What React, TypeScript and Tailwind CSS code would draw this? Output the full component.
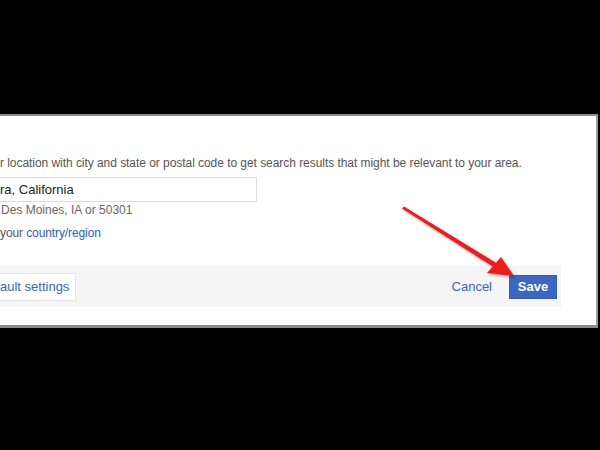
export default function App() {
  return (
    <div className="w-[600px] h-[450px] bg-black pt-[114px] font-['Liberation_Sans',Arial,sans-serif] overflow-hidden">
      <div className="relative w-[598px] h-[214px] bg-white border-t-2 border-t-[#8c8c8c] border-r-2 border-r-[#9a9a9a] border-b-[3px] border-b-[#8a8a8a] overflow-hidden">
        <div className="pt-[40px]">
          <p className="text-[12px] leading-[15px] text-[#555] whitespace-nowrap tracking-[-0.05px]">
            r location with city and state or postal code to get search results that might be relevant to your area.
          </p>
          <div className="mt-[6px] w-[257px] h-[25px] border border-l-0 border-[#dcdcdc] flex items-center">
            <span className="text-[13px] text-[#222]">ra, California</span>
          </div>
          <p className="mt-[1px] pl-[1px] text-[12px] leading-[15px] text-[#666]">Des Moines, IA or 50301</p>
          <p className="mt-[8px] text-[12px] leading-[15px] text-[#555] tracking-[-0.1px]">
            your <span className="text-[#2d5bd0]">country/region</span>
          </p>
        </div>
        <div className="mt-[25px] w-[561px] h-[41px] bg-[#f5f5f5] flex items-center">
          <div className="h-[28px] w-[76px] bg-white border border-l-0 border-[#e6e6e6] flex items-center">
            <span className="text-[13px] text-[#3b62d4] whitespace-nowrap">ault settings</span>
          </div>
          <span className="ml-auto text-[13px] text-[#3b62d4]">Cancel</span>
          <button className="ml-[17px] mr-[4px] w-[48px] h-[24px] bg-[#3a67c6] border border-[#3360bb] text-white text-[13px] font-bold">
            Save
          </button>
        </div>
        <svg className="absolute left-0 top-0 pointer-events-none" width="598" height="214" viewBox="0 114 598 214">
          <defs>
            <filter id="sh" x="-20%" y="-20%" width="140%" height="140%">
              <feDropShadow dx="1" dy="1.5" stdDeviation="1.2" floodColor="#000" floodOpacity="0.35" />
            </filter>
          </defs>
          <g filter="url(#sh)" fill="#f01c1c">
            <path d="M402 206.5 L404 204.5 L498 262 L495 266 Z" />
            <path d="M514 274 L487 271 L501 255 Z" />
          </g>
        </svg>
      </div>
    </div>
  );
}
